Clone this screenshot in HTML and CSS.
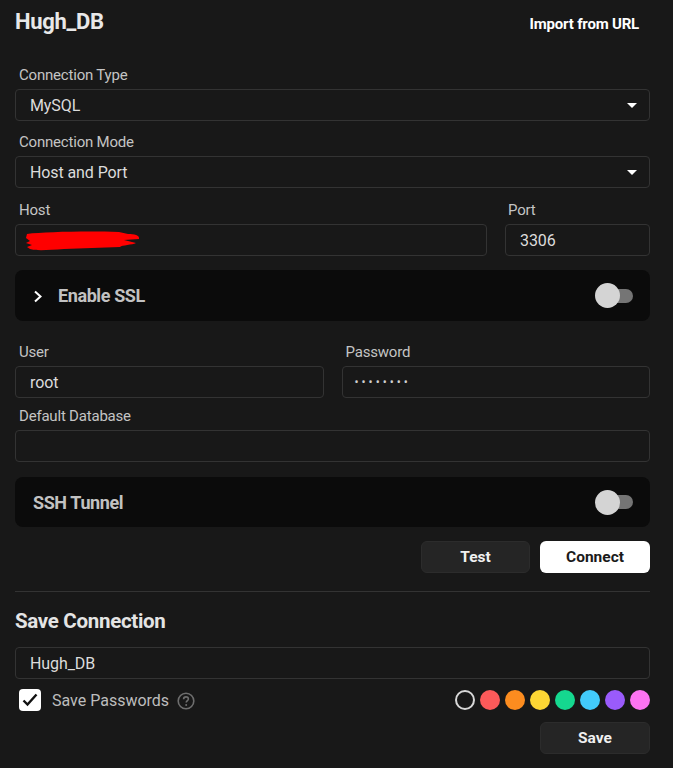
FILE: index.html
```html
<!DOCTYPE html>
<html>
<head>
<meta charset="utf-8">
<link rel="stylesheet" href="styles.css">
</head>
<body>
<div class="page">
  <div class="header">
    <h1 class="title">Hugh_DB</h1>
    <span class="import">Import from URL</span>
  </div>

  <div class="field">
    <label class="label">Connection Type</label>
    <div class="input select"><span>MySQL</span><span class="caret"></span></div>
  </div>
  <div class="field">
    <label class="label">Connection Mode</label>
    <div class="input select"><span>Host and Port</span><span class="caret"></span></div>
  </div>

  <div class="row host-row">
    <div class="field grow">
      <label class="label">Host</label>
      <div class="input">
        <svg class="scribble" width="118" height="20" viewBox="0 0 118 20">
          <path d="M3 3 C20 1 60 0 95 1 L104 3 C110 3 116 4 115 8 L100 9 L112 12 C108 14 98 14 96 16 L40 18 C25 19 12 20 6 18 L3 16 L8 14 L2 12 L6 10 L2 7 Z" fill="#ff0000"/>
        </svg>
      </div>
    </div>
    <div class="field port">
      <label class="label">Port</label>
      <div class="input"><span>3306</span></div>
    </div>
  </div>

  <div class="panel">
    <div class="panel-left">
      <svg class="chev" width="10" height="13" viewBox="0 0 10 13"><path d="M2 1.5 L7.5 6.5 L2 11.5" fill="none" stroke="#ffffff" stroke-width="2"/></svg>
      <span class="panel-title">Enable SSL</span>
    </div>
    <div class="toggle"><span class="knob"></span></div>
  </div>

  <div class="row user-row">
    <div class="field half">
      <label class="label">User</label>
      <div class="input"><span>root</span></div>
    </div>
    <div class="field half">
      <label class="label">Password</label>
      <div class="input"><span class="dots">••••••••</span></div>
    </div>
  </div>
  <div class="field db-field">
    <label class="label">Default Database</label>
    <div class="input"></div>
  </div>

  <div class="panel ssh">
    <div class="panel-left">
      <span class="panel-title">SSH Tunnel</span>
    </div>
    <div class="toggle"><span class="knob"></span></div>
  </div>

  <div class="actions">
    <button class="btn dark">Test</button>
    <button class="btn light">Connect</button>
  </div>

  <div class="divider"></div>

  <h2 class="subtitle">Save Connection</h2>
  <div class="input name"><span>Hugh_DB</span></div>

  <div class="save-row">
    <div class="check-wrap">
      <span class="checkbox">
        <svg width="16" height="14" viewBox="0 0 16 14"><path d="M1.5 7.5 L5.5 11.5 L14.5 1.5" fill="none" stroke="#111" stroke-width="2.4"/></svg>
      </span>
      <span class="check-label">Save Passwords</span>
      <svg class="help" width="18" height="18" viewBox="0 0 18 18">
        <circle cx="9" cy="9" r="7.8" fill="none" stroke="#6e6e6e" stroke-width="1.6"/>
        <path d="M6.6 7.2 C6.6 5.7 7.7 4.9 9 4.9 C10.4 4.9 11.4 5.8 11.4 7 C11.4 8.5 9.2 8.7 9.2 10.6" fill="none" stroke="#6e6e6e" stroke-width="1.6"/>
        <circle cx="9.2" cy="13" r="1" fill="#6e6e6e"/>
      </svg>
    </div>
    <div class="colors">
      <span class="dot none"></span>
      <span class="dot c1"></span>
      <span class="dot c2"></span>
      <span class="dot c3"></span>
      <span class="dot c4"></span>
      <span class="dot c5"></span>
      <span class="dot c6"></span>
      <span class="dot c7"></span>
    </div>
  </div>

  <div class="actions save-actions">
    <button class="btn dark">Save</button>
  </div>
</div>
</body>
</html>
```

FILE: styles.css
```css
* { box-sizing: border-box; }
html, body { margin: 0; padding: 0; }
body {
  background: #181818;
  font-family: Roboto, "Liberation Sans", sans-serif;
  color: #d8d8d8;
  width: 673px;
  height: 768px;
  overflow: hidden;
}
.page {
  padding: 8px 23px 0 15px;
  display: flex;
  flex-direction: column;
}
.header {
  display: flex;
  justify-content: space-between;
  align-items: flex-start;
  height: 57px;
}
.title {
  margin: 0;
  font-size: 22px;
  font-weight: 700;
  color: #e8e8e8;
  line-height: 28px;
  letter-spacing: -0.3px;
}
.import {
  font-size: 15px;
  font-weight: 700;
  color: #ffffff;
  margin-top: 7px;
  margin-right: 11px;
  letter-spacing: -0.2px;
}
.field {
  display: flex;
  flex-direction: column;
}
.label {
  font-size: 15px;
  color: #c4c4c4;
  line-height: 20px;
  padding-left: 4px;
  margin-bottom: 4px;
  letter-spacing: -0.2px;
}
.input {
  height: 32px;
  border: 1px solid #333333;
  border-radius: 4px;
  background: #181818;
  display: flex;
  align-items: center;
  padding: 0 14px;
  font-size: 16px;
  color: #dcdcdc;
  letter-spacing: -0.1px;
}
.select {
  justify-content: space-between;
  margin-bottom: 11px;
}
.caret {
  width: 0;
  height: 0;
  border-left: 5px solid transparent;
  border-right: 5px solid transparent;
  border-top: 5px solid #ffffff;
  margin-right: -2px;
}
.row {
  display: flex;
  gap: 18px;
}
.host-row { margin-top: 1px; }
.grow { flex: 1; }
.port { width: 145px; }
.port .label { padding-left: 3px; }
.scribble { margin-left: -6px; margin-top: 1px; }
.half { flex: 1; }
.panel {
  margin-top: 14px;
  height: 51px;
  background: #0b0b0b;
  border-radius: 8px;
  display: flex;
  align-items: center;
  justify-content: space-between;
  padding: 0 17px 0 18px;
}
.panel-left {
  display: flex;
  align-items: center;
}
.chev { margin-right: 15px; margin-top: 1px; }
.panel-title {
  font-size: 18px;
  font-weight: 700;
  color: #c2c2c2;
  letter-spacing: -0.4px;
}
.toggle {
  position: relative;
  width: 38px;
  height: 24px;
  display: flex;
  align-items: center;
}
.toggle::before {
  content: "";
  position: absolute;
  left: 12px;
  right: 0;
  height: 14px;
  background: #757575;
  border-radius: 7px;
}
.knob {
  position: relative;
  width: 25px;
  height: 25px;
  border-radius: 50%;
  background: #d4d4d4;
}
.user-row { margin-top: 21px; gap: 18px; }
.db-field { margin-top: 8px; }
.dots { font-size: 12px; letter-spacing: 3px; color: #d0d0d0; margin-left: -2px; }
.ssh { margin-top: 15px; height: 50px; }
.actions {
  display: flex;
  justify-content: flex-end;
  gap: 10px;
  margin-top: 14px;
}
.btn {
  width: 110px;
  height: 32px;
  border: none;
  border-radius: 6px;
  font-family: Roboto, "Liberation Sans", sans-serif;
  font-size: 15.5px;
  font-weight: 700;
}
.btn.dark {
  background: #252525;
  color: #f0f0f0;
  border: 1px solid #2c2c2c;
}
.btn.light {
  background: #ffffff;
  color: #1a1a1a;
}
.btn.dark:first-child { width: 109px; }
.divider {
  height: 1px;
  background: #333333;
  margin-top: 18px;
}
.subtitle {
  margin: 16px 0 0;
  font-size: 20.5px;
  font-weight: 700;
  color: #e4e4e4;
  line-height: 26px;
  letter-spacing: -0.3px;
}
.name { margin-top: 13px; height: 32px; }
.save-row {
  display: flex;
  justify-content: space-between;
  align-items: center;
  margin-top: 9px;
  height: 24px;
}
.check-wrap {
  display: flex;
  align-items: center;
  padding-left: 4px;
}
.checkbox {
  width: 22px;
  height: 22px;
  background: #ffffff;
  border-radius: 4px;
  display: flex;
  align-items: center;
  justify-content: center;
}
.check-label {
  font-size: 16px;
  color: #bdbdbd;
  margin-left: 11px;
  margin-right: 8px;
}
.help { margin-top: 1px; }
.colors {
  display: flex;
  gap: 5px;
}
.dot {
  width: 20px;
  height: 20px;
  border-radius: 50%;
}
.dot.none { border: 2px solid #d8d8d8; }
.c1 { background: #fc5a5a; }
.c2 { background: #fc8c1f; }
.c3 { background: #fcd634; }
.c4 { background: #15d88f; }
.c5 { background: #42cbfb; }
.c6 { background: #9a5bfb; }
.c7 { background: #fc73f1; }
.save-actions { margin-top: 10px; }
.save-actions .btn.dark { width: 110px; height: 32px; }
```
